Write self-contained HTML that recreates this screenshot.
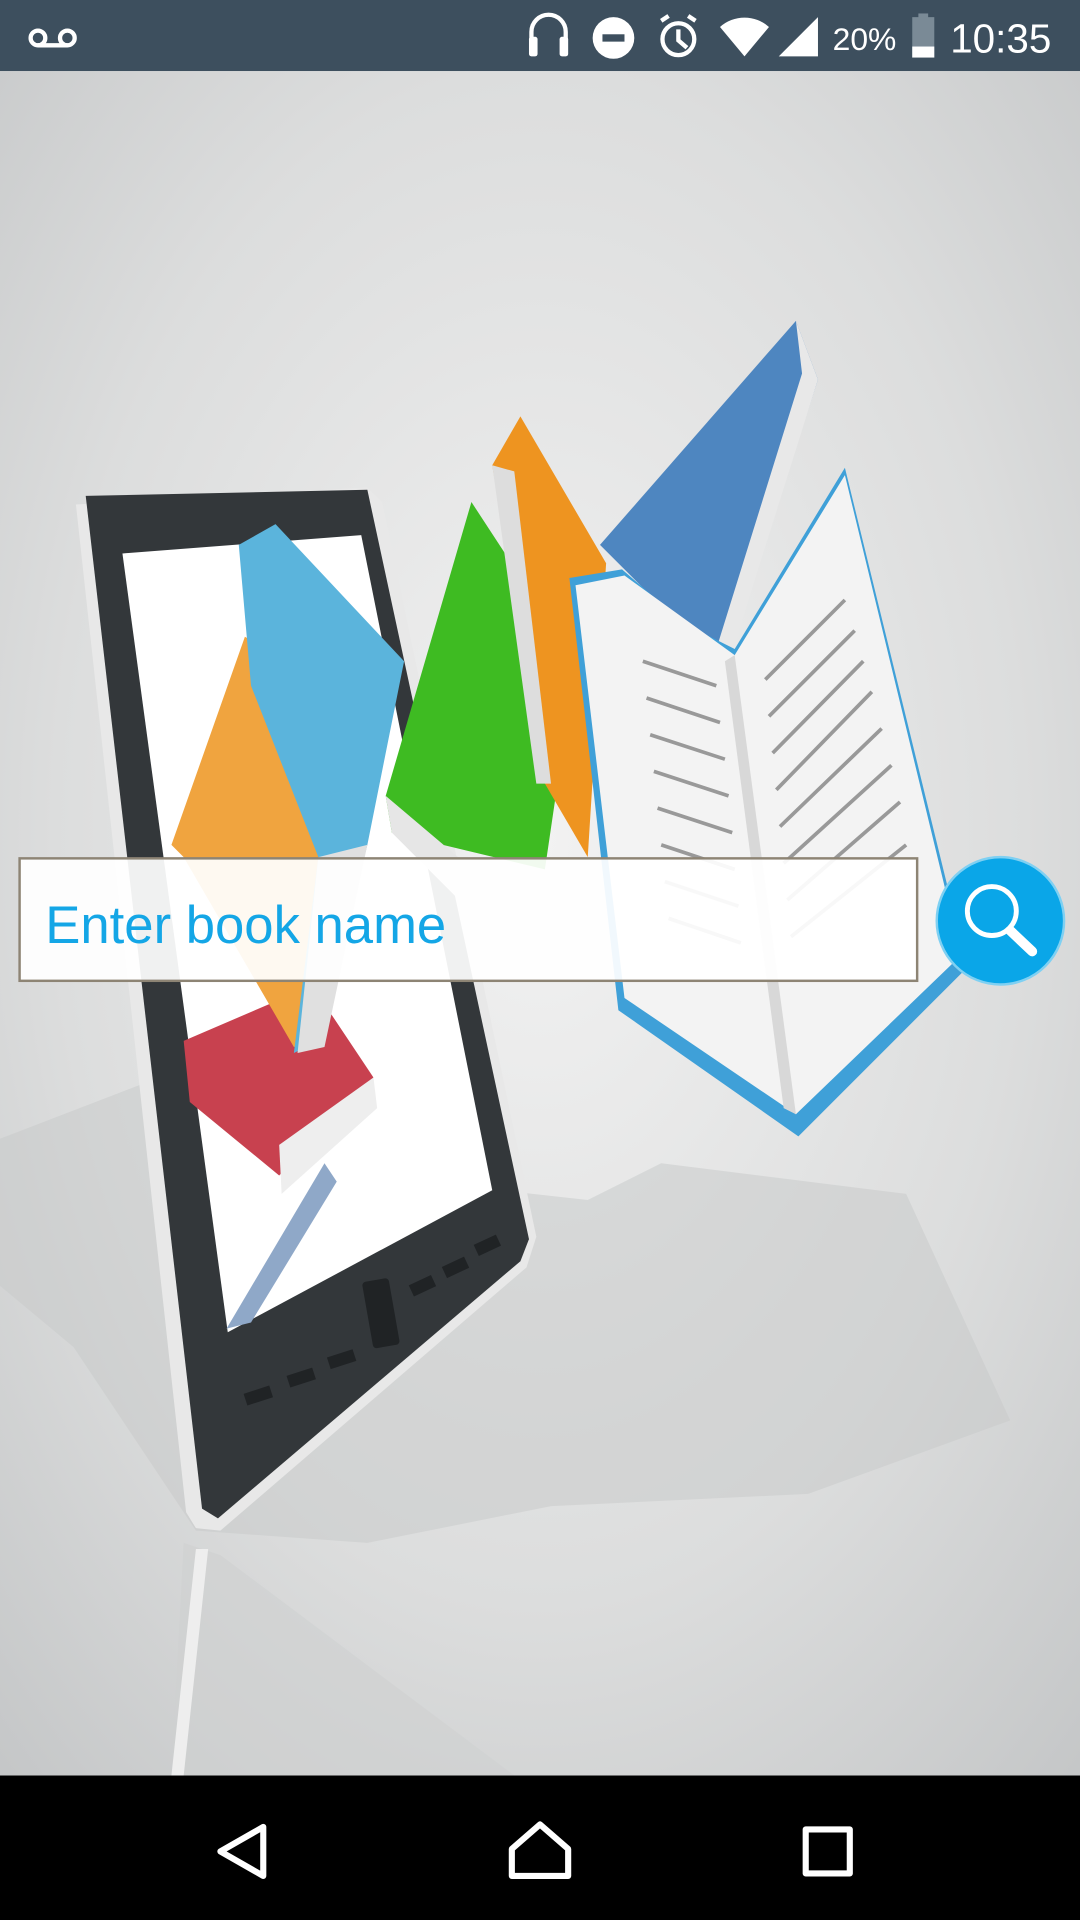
<!DOCTYPE html>
<html><head><meta charset="utf-8"><style>
html,body{margin:0;padding:0;width:1080px;height:1920px;overflow:hidden;font-family:"Liberation Sans",sans-serif}
svg{display:block}
</style></head><body>
<svg width="1080" height="1920" viewBox="0 0 882 1568" xmlns="http://www.w3.org/2000/svg">
<defs>
<radialGradient id="bg" cx="0.5" cy="0.45" r="0.75">
<stop offset="0" stop-color="#f2f2f2"/><stop offset="0.6" stop-color="#dcdddd"/><stop offset="1" stop-color="#c4c6c7"/>
</radialGradient>
</defs>
<rect x="0" y="58" width="882" height="1392" fill="url(#bg)"/>
<!-- shadows -->
<polygon points="0,930 130,880 300,960 480,980 540,950 740,975 825,1160 660,1220 450,1230 300,1260 160,1250 60,1100 0,1050" fill="#c9caca" opacity="0.55"/>
<polygon points="150,1260 180,1270 420,1450 140,1450" fill="#cfd0d0" opacity="0.6"/>
<polygon points="160,1265 170,1265 150,1450 140,1450" fill="#eeeeee"/>
<!-- tablet -->
<polygon points="62,412 300,398 312,410 438,1010 430,1035 180,1250 160,1248 152,1235" fill="#e8e8e8"/>
<polygon points="70,405 300,400 432,1012 425,1030 178,1240 165,1232" fill="#33373a"/>
<polygon points="100,452 295,437 402,972 186,1088" fill="#ffffff"/>
<g fill="#202325"><rect x="200" y="1135" width="22" height="10" transform="rotate(-18 210 1140)"/><rect x="235" y="1120" width="22" height="10" transform="rotate(-18 246 1125)"/><rect x="268" y="1105" width="22" height="10" transform="rotate(-18 279 1110)"/><rect x="335" y="1045" width="20" height="10" transform="rotate(-25 345 1050)"/><rect x="362" y="1030" width="20" height="10" transform="rotate(-25 372 1035)"/><rect x="388" y="1012" width="20" height="10" transform="rotate(-25 398 1017)"/><rect x="300" y="1045" width="22" height="55" rx="3" transform="rotate(-10 311 1072)"/></g>
<!-- red book -->
<polygon points="150,850 255,805 305,880 228,960 155,900" fill="#c8414f"/>
<polygon points="228,935 305,880 308,905 230,975" fill="#eeeeee"/>
<polygon points="185,1085 265,950 275,965 205,1080" fill="#8fa8c8"/>
<!-- orange book -->
<polygon points="140,690 200,520 270,560 255,850 240,855 150,700" fill="#f0a43f"/>
<!-- blue book near tablet -->
<polygon points="195,445 225,428 330,540 300,690 260,850 240,860 260,700 205,560" fill="#5bb4dc"/>
<polygon points="260,700 300,690 265,855 243,860" fill="#e0e0e0"/>
<!-- green book -->
<polygon points="315,650 385,410 470,540 445,710 320,680" fill="#3ebb22"/>
<polygon points="315,650 320,680 440,800 445,760" fill="#e6e6e6"/>
<!-- orange standing -->
<polygon points="402,380 425,340 495,460 480,700 445,640" fill="#ee9420"/>
<polygon points="402,380 420,385 450,640 438,640" fill="#dddddd"/>
<!-- blue top book -->
<polygon points="490,445 650,262 668,310 595,535 550,505" fill="#4e86c0"/>
<polygon points="650,262 668,310 597,535 585,530 655,305" fill="#e8e8e8"/>
<!-- open book -->
<polygon points="465,472 508,465 560,510 600,530 690,382 790,790 652,928 505,825" fill="#3fa0d8"/>
<polygon points="470,478 510,470 600,535 690,388 785,780 650,910 510,815" fill="#f3f3f3"/>
<polygon points="600,535 650,910 640,905 592,540" fill="#d8d8d8"/>
<g stroke="#999" stroke-width="3" fill="none">
<path d="M525 540 L585 560 M528 570 L588 590 M531 600 L592 620 M534 630 L595 650 M537 660 L598 680 M540 690 L600 710 M543 720 L603 740 M546 750 L605 770"/>
<path d="M625 555 L690 490 M628 585 L698 515 M631 615 L705 540 M634 645 L712 565 M637 675 L720 595 M640 705 L728 625 M643 735 L735 655 M646 765 L740 690"/>
</g>
<!-- search box -->
<rect x="16" y="701" width="733" height="100" fill="#ffffff" fill-opacity="0.93" stroke="#8d8474" stroke-width="2"/>
<text x="37" y="770" font-family="Liberation Sans, sans-serif" font-size="43" fill="#14a6e6">Enter book name</text>
<!-- search button -->
<circle cx="817" cy="752" r="52" fill="#0aa6e8" stroke="#7fd0f2" stroke-width="2"/>
<circle cx="810" cy="744" r="20" fill="none" stroke="#fff" stroke-width="4"/>
<line x1="825" y1="760" x2="843" y2="777" stroke="#fff" stroke-width="8" stroke-linecap="round"/>
<!-- status bar -->
<rect x="0" y="0" width="882" height="58" fill="#3d4f5e"/>
<g fill="none" stroke="#fff" stroke-width="3.5">
<circle cx="31" cy="31" r="6"/><circle cx="55" cy="31" r="6"/><line x1="31" y1="37" x2="55" y2="37"/>
<path d="M434 44 V26 a14 14 0 0 1 28 0 V44"/>
<circle cx="554" cy="32" r="13"/><path d="M554 24 V33 L561 39"/><path d="M540 17 l6 -4 M568 17 l-6 -4"/>
</g>
<rect x="432" y="30" width="7" height="16" rx="2" fill="#fff"/><rect x="457" y="30" width="7" height="16" rx="2" fill="#fff"/>
<circle cx="501" cy="31" r="17" fill="#fff"/><rect x="492" y="28" width="18" height="6" fill="#3d4f5e"/>
<path d="M588 22 a30 30 0 0 1 40 0 L608 46 Z" fill="#fff"/>
<polygon points="636,46 668,14 668,46" fill="#fff"/>
<text x="680" y="41" font-size="26" fill="#fff">20%</text>
<rect x="745" y="14" width="18" height="33" fill="#7a8a96"/><rect x="745" y="38" width="18" height="9" fill="#fff"/><rect x="750" y="11" width="8" height="4" fill="#7a8a96"/>
<text x="776" y="43" font-size="33" fill="#fff">10:35</text>
<!-- nav bar -->
<rect x="0" y="1450" width="882" height="118" fill="#000"/>
<g fill="none" stroke="#fff" stroke-width="5" stroke-linejoin="round">
<polygon points="215,1492 215,1532 180,1512"/>
<path d="M418 1532 V1510 L441 1490 L464 1510 V1532 Z"/>
<rect x="658" y="1494" width="36" height="36"/>
</g>
</svg>
</body></html>
